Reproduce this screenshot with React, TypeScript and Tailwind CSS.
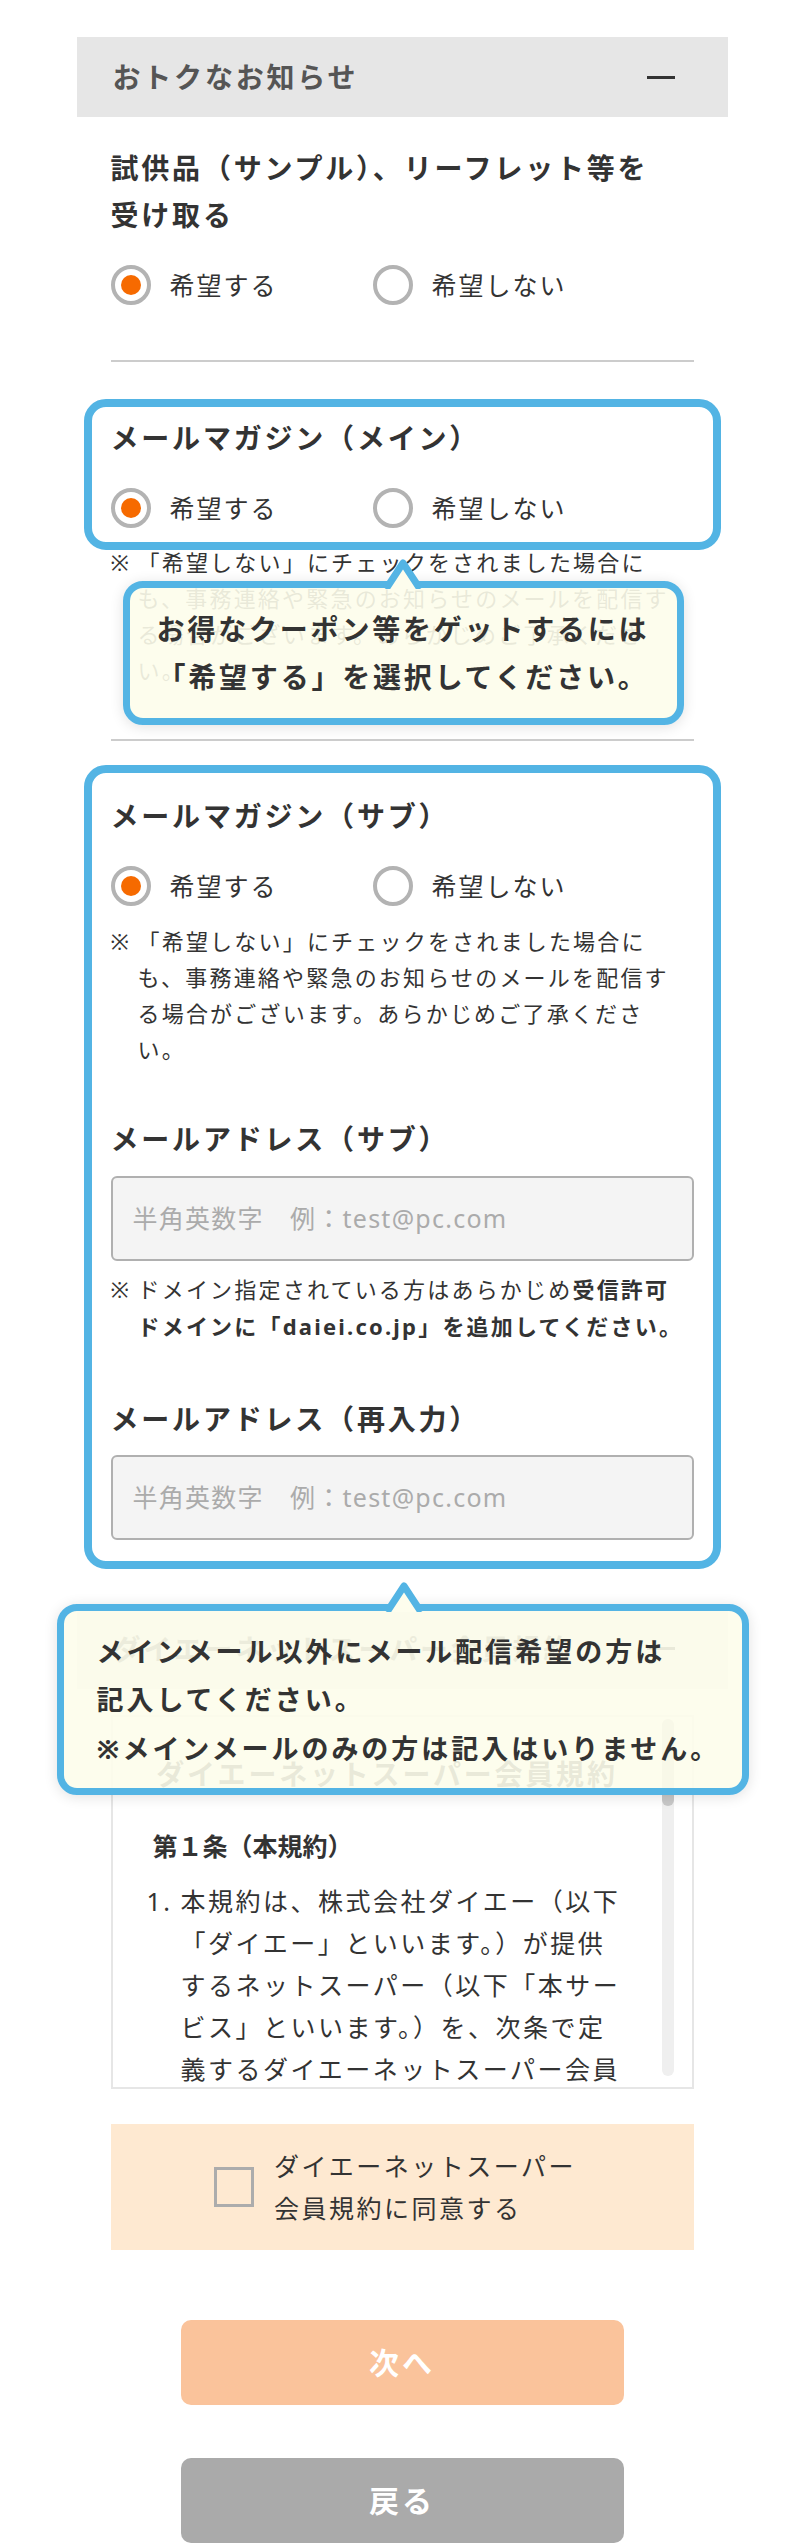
import type { ReactNode } from "react";

const titleClass =
  "text-[28px] font-bold leading-[47px] tracking-[0.1em] text-[#333]";

const inputClass =
  "h-[85px] w-full rounded-[6px] border-2 border-[#b0b0b0] bg-[#f4f4f4] pl-[20px] text-[25px] tracking-[0.05em] text-[#333] outline-none placeholder:text-[#ababab]";

function Radio({ checked, label }: { checked?: boolean; label: string }) {
  return (
    <label className="flex items-center gap-[19px]">
      <span className="flex h-[40px] w-[40px] shrink-0 items-center justify-center rounded-full border-[4px] border-[#b3b3b3] bg-white">
        {checked && (
          <span className="h-[20px] w-[20px] rounded-full bg-[#f66a00]" />
        )}
      </span>
      <span className="text-[25px] leading-[40px] tracking-[0.08em] text-[#333]">
        {label}
      </span>
    </label>
  );
}

function RadioRow() {
  return (
    <div className="flex items-center">
      <div className="w-[262px]">
        <Radio checked label="希望する" />
      </div>
      <Radio label="希望しない" />
    </div>
  );
}

function Note({ children }: { children: ReactNode }) {
  return (
    <div className="flex text-[22px] leading-[36px] tracking-[0.1em] text-[#333]">
      <span className="w-[27px] shrink-0">※</span>
      <p className="w-[550px]">{children}</p>
    </div>
  );
}

function Arrow({ className }: { className: string }) {
  return (
    <svg
      className={className}
      width="50"
      height="33"
      viewBox="0 0 50 33"
      aria-hidden="true"
    >
      <polygon points="8,33 25,7 42,33" fill="#fdfded" />
      <polyline
        points="8,33 25,7 42,33"
        fill="none"
        stroke="#53b4e4"
        strokeWidth="7"
        strokeLinejoin="round"
      />
    </svg>
  );
}

function SectionBar({ label }: { label: string }) {
  return (
    <div className="-mx-[34px] flex h-[80px] items-center justify-between bg-[#e6e6e6] pl-[36px] pr-[53px]">
      <span className="text-[28px] font-bold tracking-[0.1em] text-[#555]">
        {label}
      </span>
      <span className="h-[3px] w-[28px] bg-[#333]" />
    </div>
  );
}

const mailNote =
  "「希望しない」にチェックをされました場合にも、事務連絡や緊急のお知らせのメールを配信する場合がございます。あらかじめご了承ください。";

export default function App() {
  return (
    <div className="min-h-[2546px] bg-white font-['Noto_Sans','Noto_Sans_CJK_JP',sans-serif] text-[#333]">
      <div className="mx-auto w-[583px] pt-[37px]">
        <SectionBar label="おトクなお知らせ" />

        <h2 className={`mt-[28px] ${titleClass}`}>
          試供品（サンプル）、リーフレット等を
          <br />
          受け取る
        </h2>
        <div className="mt-[26px]">
          <RadioRow />
        </div>

        <div className="mt-[55px] h-[2px] bg-[#cccccc]" />

        {/* メールマガジン（メイン） */}
        <div className="relative -mx-[27px] mt-[37px] rounded-[22px] border-[8px] border-[#53b4e4] px-[19px] pb-[14px] pt-[7.5px]">
          <h2 className={titleClass}>メールマガジン（メイン）</h2>
          <div className="mt-[26px]">
            <RadioRow />
          </div>

          <div className="absolute left-[31px] top-[calc(100%+39px)] z-10 w-[561px] rounded-[20px] border-[7px] border-[#53b4e4] bg-[#fdfdeb]/90 pb-[17px] pt-[17px] text-center text-[28px] font-bold leading-[48px] tracking-[0.1em] text-[#333] shadow-[0_2px_14px_rgba(0,0,0,0.12)]">
            <Arrow className="absolute left-[248px] top-[-32px]" />
            お得なクーポン等をゲットするには
            <br />
            「希望する」を選択してください。
          </div>
        </div>
        <div className="-mt-[6px]">
          <Note>{mailNote}</Note>
        </div>

        <div className="mt-[51px] h-[2px] bg-[#cccccc]" />

        {/* メールマガジン（サブ） */}
        <div className="relative -mx-[27px] mt-[24px] rounded-[22px] border-[8px] border-[#53b4e4] px-[19px] pb-[21px] pt-[20px]">
          <h2 className={titleClass}>メールマガジン（サブ）</h2>
          <div className="mt-[26px]">
            <RadioRow />
          </div>
          <div className="mt-[17px]">
            <Note>{mailNote}</Note>
          </div>

          <h2 className={`mt-[49px] ${titleClass}`}>メールアドレス（サブ）</h2>
          <input
            type="email"
            placeholder="半角英数字　例：test@pc.com"
            className={`mt-[13px] ${inputClass}`}
          />
          <div className="mt-[10px] [&_div]:leading-[37px]">
            <Note>
              ドメイン指定されている方はあらかじめ
              <b className="font-bold">
                受信許可ドメインに「daiei.co.jp」を追加してください。
              </b>
            </Note>
          </div>

          <h2 className={`mt-[51px] ${titleClass}`}>
            メールアドレス（再入力）
          </h2>
          <input
            type="email"
            placeholder="半角英数字　例：test@pc.com"
            className={`mt-[12px] ${inputClass}`}
          />

          <div className="absolute left-[-35px] top-[calc(100%+43px)] z-10 w-[692px] rounded-[20px] border-[7px] border-[#53b4e4] bg-[#fdfdeb]/90 pb-[15px] pl-[33px] pt-[17px] text-[27px] font-bold leading-[48.5px] tracking-[0.11em] text-[#333] shadow-[0_2px_14px_rgba(0,0,0,0.12)]">
            <Arrow className="absolute left-[315px] top-[-32px]" />
            メインメール以外にメール配信希望の方は
            <br />
            記入してください。
            <br />
            ※メインメールのみの方は記入はいりません。
          </div>
        </div>

        <div className="mt-[40px]">
          <SectionBar label="ダイエーネットスーパー会員規約" />
        </div>

        {/* 規約 */}
        <div className="mt-[26px] flex h-[374px] overflow-hidden border-2 border-[#e6e6e6]">
          <div className="flex-1 pt-[34px]">
            <h3 className="text-center text-[28px] font-bold leading-[47px] tracking-[0.1em] text-[#333]">
              ダイエーネットスーパー会員規約
            </h3>
            <h4 className="mt-[27px] pl-[40px] text-[25px] font-bold leading-[42px] text-[#333]">
              第１条（本規約）
            </h4>
            <div className="mt-[13px] flex pl-[34px] text-[25px] leading-[42px] tracking-[0.1em] text-[#333]">
              <span className="w-[34px] shrink-0">1.</span>
              <p className="w-[450px]">
                本規約は、株式会社ダイエー（以下「ダイエー」といいます。）が提供するネットスーパー（以下「本サービス」といいます。）を、次条で定義するダイエーネットスーパー会員が利用する際の条件を定めるものです。
              </p>
            </div>
          </div>
          <div className="mr-[18px] mt-[2px] flex h-[357px] w-[12px] flex-col rounded-full bg-[#efefef]">
            <div className="h-[87px] rounded-full bg-[#c8c8c8]" />
          </div>
        </div>

        <label className="mt-[35px] flex h-[126px] items-center justify-center gap-[20px] bg-[#fee9d1] pr-[14px]">
          <span className="h-[40px] w-[40px] shrink-0 border-[3px] border-[#acacac]" />
          <span className="text-[25px] leading-[42px] tracking-[0.1em] text-[#333]">
            ダイエーネットスーパー
            <br />
            会員規約に同意する
          </span>
        </label>

        <div className="flex flex-col items-center pb-[4px]">
          <button
            type="button"
            className="mt-[70px] h-[85px] w-[443px] rounded-[10px] bg-[#fac39b] text-[30px] font-bold tracking-[0.1em] text-white"
          >
            次へ
          </button>
          <button
            type="button"
            className="mt-[53px] h-[85px] w-[443px] rounded-[10px] bg-[#aaaaaa] text-[30px] font-bold tracking-[0.1em] text-white"
          >
            戻る
          </button>
        </div>
      </div>
    </div>
  );
}
